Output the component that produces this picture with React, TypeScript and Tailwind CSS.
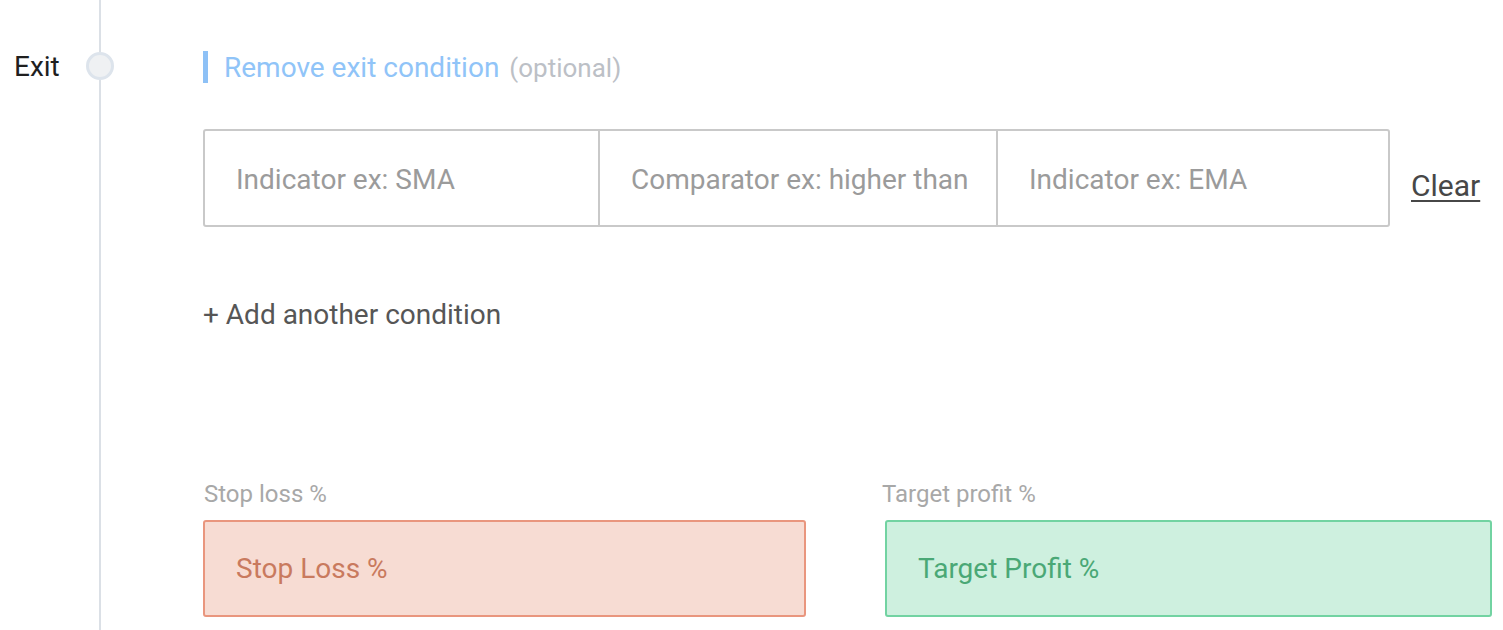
import React from 'react';

const conditionFields = [
  { text: 'Indicator ex: SMA', width: 'w-[393px]' },
  { text: 'Comparator ex: higher than', width: 'w-[398px] border-l-2 border-[#c9c9c9]' },
  { text: 'Indicator ex: EMA', width: 'flex-1 border-l-2 border-[#c9c9c9]' },
];

const Timeline: React.FC<{ label: string }> = ({ label }) => (
  <div className="flex shrink-0">
    <div className="w-[86px] pl-[14px] pt-[51px] text-[28px] leading-[32px] text-[#1f1f1f]">{label}</div>
    <div className="flex w-[28px] flex-col items-center">
      <div className="h-[52px] w-[2px] bg-[#dbe0e6]" />
      <div className="h-[28px] w-[28px] rounded-full border-[3px] border-[#dde4ec] bg-[#eff1f3]" />
      <div className="w-[2px] flex-1 bg-[#dbe0e6]" />
    </div>
  </div>
);

export default function App() {
  return (
    <div className="flex h-[630px] w-[1503px] overflow-hidden bg-white font-['Roboto',sans-serif]">
      <Timeline label="Exit" />

      <div className="flex flex-1 flex-col pl-[89px] pt-[51px]">
        {/* Header */}
        <div className="flex h-[32px] items-center">
          <span className="h-[32px] w-[5px] bg-[#8ec1f6]" />
          <span className="ml-[16px] pt-[1px] text-[28px] leading-[32px] text-[#90c4f8]">Remove exit condition</span>
          <span className="ml-[10px] pt-[1px] text-[26px] leading-[32px] text-[#bcc0c6]">(optional)</span>
        </div>

        {/* Condition row */}
        <div className="mt-[46px] flex items-center">
          <div className="flex h-[98px] w-[1187px] rounded-[3px] border-2 border-[#c9c9c9]">
            {conditionFields.map((field) => (
              <div
                key={field.text}
                className={`flex items-center pl-[31px] pt-[3px] text-[28px] text-[#9b9b9b] ${field.width}`}
              >
                {field.text}
              </div>
            ))}
          </div>
          <span className="ml-[21px] pt-[14px] text-[30px] text-[#474747] underline decoration-2 underline-offset-[4px]">Clear</span>
        </div>

        <div className="mt-[72px] text-[28px] leading-[32px] text-[#565656]">+ Add another condition</div>

        {/* Stop loss / target profit */}
        <div className="mt-[149px] flex gap-[76px]">
          <div className="flex w-[603px] flex-col">
            <span className="pl-[1px] text-[24px] leading-[28px] text-[#a8a8a8]">Stop loss %</span>
            <div className="mt-[12px] flex h-[97px] items-center rounded-[3px] border-2 border-[#e9967e] bg-[#f7dcd3] pl-[31px] text-[28px] text-[#c97a5e]">
              Stop Loss %
            </div>
          </div>
          <div className="flex flex-col">
            <span className="text-[24px] leading-[28px] text-[#a8a8a8]">Target profit %</span>
            <div className="mt-[12px] ml-[3px] flex h-[97px] w-[607px] items-center rounded-[3px] border-2 border-[#72d3a2] bg-[#cef0df] pl-[31px] text-[28px] text-[#4aa876]">
              Target Profit %
            </div>
          </div>
        </div>
      </div>
    </div>
  );
}
